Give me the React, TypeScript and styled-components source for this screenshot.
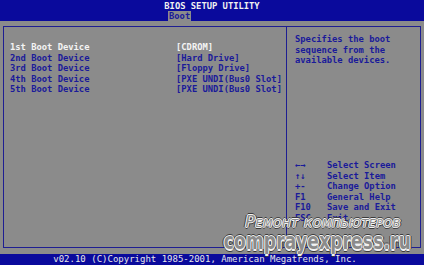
import styled, { createGlobalStyle } from 'styled-components';

const GlobalStyle = createGlobalStyle`
  html, body {
    margin: 0;
    padding: 0;
    background: #8b8b8b;
  }
`;

const BLUE = '#0a0a9c';
const INK = '#1a1a9a';
const GREY = '#8b8b8b';

const Screen = styled.div`
  position: relative;
  width: 424px;
  height: 265px;
  display: flex;
  flex-direction: column;
  background: ${GREY};
  font-family: 'DejaVu Sans Mono', 'Liberation Mono', monospace;
  font-weight: bold;
  font-size: 8.8px;
  overflow: hidden;
`;

const Header = styled.header`
  height: 21px;
  background: ${BLUE};
  display: flex;
  flex-direction: column;
`;

const Title = styled.div`
  color: #f0f0f0;
  text-align: center;
  line-height: 10px;
  padding-top: 1px;
`;

const TabBar = styled.div`
  margin-top: auto;
  display: flex;
  padding-left: 168px;
`;

const Tab = styled.div<{ $active?: boolean }>`
  height: 10px;
  line-height: 10px;
  padding: 0 1px;
  background: ${(p) => (p.$active ? GREY : 'transparent')};
  color: ${(p) => (p.$active ? INK : '#f0f0f0')};
`;

const Main = styled.main`
  flex: 1;
  display: flex;
  padding: 5px 3px 6px 3px;
`;

const Frame = styled.div`
  flex: 1;
  display: grid;
  grid-template-columns: 1fr 133px;
  border: 1.5px solid #1e1e92;
`;

const LeftPane = styled.section`
  padding: 15px 0 0 6px;
  border-right: 1.5px solid #1e1e92;
`;

const Row = styled.div<{ $selected?: boolean }>`
  display: grid;
  grid-template-columns: 166px 1fr;
  line-height: 10.5px;
  white-space: pre;
  color: ${(p) => (p.$selected ? '#f4f4f4' : INK)};
`;

const RightPane = styled.aside`
  display: flex;
  flex-direction: column;
  justify-content: space-between;
  padding: 7px 0 24px 8px;
  color: ${INK};
`;

const Help = styled.p`
  margin: 0;
  line-height: 10.5px;
  white-space: pre;
`;

const Keys = styled.div`
  display: flex;
  flex-direction: column;
`;

const KeyLine = styled.div`
  display: grid;
  grid-template-columns: 32px 1fr;
  line-height: 10.5px;
  white-space: pre;
`;

const Footer = styled.footer`
  height: 11px;
  background: ${BLUE};
  color: #e8e8e8;
  text-align: center;
  font-weight: normal;
  font-size: 9px;
  line-height: 11px;
  padding-right: 14px;
`;

const Watermark = styled.div`
  position: absolute;
  right: 13px;
  bottom: 9px;
  display: flex;
  flex-direction: column;
  align-items: flex-end;
  pointer-events: none;
  font-family: 'DejaVu Sans', 'Liberation Sans', sans-serif;
  color: #8b8b8b;
  text-shadow:
    1px 0 0 #f2f2f2, -1px 0 0 #f2f2f2, 0 1px 0 #f2f2f2, 0 -1px 0 #f2f2f2,
    2px 0 0 #3a3a3a, -2px 0 0 #3a3a3a, 0 2px 0 #3a3a3a, 0 -2px 0 #3a3a3a;
`;

const MarkTop = styled.span`
  font-size: 16px;
  font-style: italic;
  font-weight: normal;
  font-variant: small-caps;
  letter-spacing: 0.6px;
  line-height: 18px;
  margin-right: 10px;
  margin-bottom: 3px;
`;

const MarkBottom = styled.span`
  font-size: 17px;
  font-weight: bold;
  letter-spacing: 0.2px;
  line-height: 22px;
  transform: scaleY(1.3);
  transform-origin: bottom;
`;

const devices = [
  ['1st Boot Device', '[CDROM]'],
  ['2nd Boot Device', '[Hard Drive]'],
  ['3rd Boot Device', '[Floppy Drive]'],
  ['4th Boot Device', '[PXE UNDI(Bus0 Slot]'],
  ['5th Boot Device', '[PXE UNDI(Bus0 Slot]'],
];

const keys = [
  ['←→', 'Select Screen'],
  ['↑↓', 'Select Item'],
  ['+-', 'Change Option'],
  ['F1', 'General Help'],
  ['F10', 'Save and Exit'],
  ['ESC', 'Exit'],
];

export default function App() {
  return (
    <Screen>
      <GlobalStyle />
      <Header>
        <Title>BIOS SETUP UTILITY</Title>
        <TabBar>
          <Tab $active>Boot</Tab>
        </TabBar>
      </Header>
      <Main>
        <Frame>
          <LeftPane>
            {devices.map(([name, value], i) => (
              <Row key={name} $selected={i === 0}>
                <span>{name}</span>
                <span>{value}</span>
              </Row>
            ))}
          </LeftPane>
          <RightPane>
            <Help>{'Specifies the boot\nsequence from the\navailable devices.'}</Help>
            <Keys>
              {keys.map(([k, label]) => (
                <KeyLine key={k}>
                  <span>{k}</span>
                  <span>{label}</span>
                </KeyLine>
              ))}
            </Keys>
          </RightPane>
        </Frame>
      </Main>
      <Footer>v02.10 (C)Copyright 1985-2001, American Megatrends, Inc.</Footer>
      <Watermark>
        <MarkTop>Ремонт компьютеров</MarkTop>
        <MarkBottom>comprayexpress.ru</MarkBottom>
      </Watermark>
    </Screen>
  );
}
